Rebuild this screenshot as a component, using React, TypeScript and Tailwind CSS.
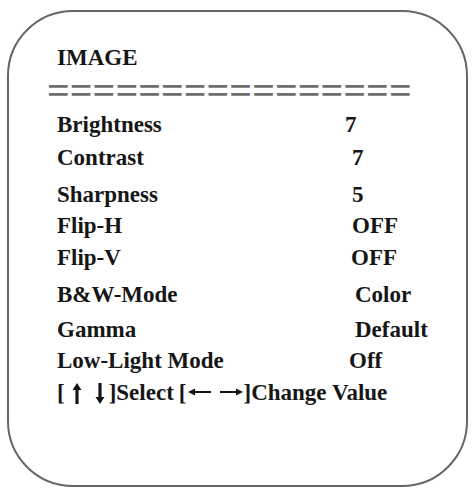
import React from "react";

const rows: { label: string; value: string; h: string; ml: string }[] = [
  { label: "Brightness", value: "7", h: "h-[33px]", ml: "ml-[0px]" },
  { label: "Contrast", value: "7", h: "h-[37px]", ml: "ml-[7px]" },
  { label: "Sharpness", value: "5", h: "h-[31px]", ml: "ml-[7px]" },
  { label: "Flip-H", value: "OFF", h: "h-[32px]", ml: "ml-[7px]" },
  { label: "Flip-V", value: "OFF", h: "h-[37px]", ml: "ml-[6px]" },
  { label: "B&W-Mode", value: "Color", h: "h-[35px]", ml: "ml-[10px]" },
  { label: "Gamma", value: "Default", h: "h-[31px]", ml: "ml-[10px]" },
  { label: "Low-Light Mode", value: "Off", h: "h-[32px]", ml: "ml-[4px]" },
];

function UpArrow() {
  return (
    <svg width="12" height="21" viewBox="0 0 12 21" className="inline-block align-[-4px]">
      <path d="M6 5 L6 21" stroke="#151515" strokeWidth="3.2" />
      <path d="M6 0 L10.5 7 L1.5 7 Z" fill="#151515" />
    </svg>
  );
}

function DownArrow() {
  return (
    <svg width="12" height="21" viewBox="0 0 12 21" className="inline-block align-[-4px]">
      <path d="M6 0 L6 16" stroke="#151515" strokeWidth="3.2" />
      <path d="M6 21 L10.5 14 L1.5 14 Z" fill="#151515" />
    </svg>
  );
}

function LeftArrow() {
  return (
    <svg width="23" height="10" viewBox="0 0 23 10" className="inline-block align-[3px]">
      <path d="M5 5 L23 5" stroke="#151515" strokeWidth="2" />
      <path d="M0 5 L7 1.5 L7 8.5 Z" fill="#151515" />
    </svg>
  );
}

function RightArrow() {
  return (
    <svg width="23" height="10" viewBox="0 0 23 10" className="inline-block align-[3px]">
      <path d="M0 5 L18 5" stroke="#151515" strokeWidth="2" />
      <path d="M23 5 L16 1.5 L16 8.5 Z" fill="#151515" />
    </svg>
  );
}

export default function App() {
  return (
    <div className="w-[473px] h-[490px] bg-white overflow-hidden">
      <div className="ml-[7px] mt-[10px] w-[461px] h-[477px] border-2 border-[#666] rounded-[66px] pt-[29px] pl-[48px] text-[#161616] [font-family:'Liberation_Serif',serif] font-bold text-[23px] leading-[33px]">
        <div className="h-[33px]">IMAGE</div>
        <div className="h-[34px] -ml-[10px] text-[40px] leading-[34px] font-bold text-[#6e6e6e] whitespace-nowrap">
          ================
        </div>
        {rows.map((r) => (
          <div key={r.label} className={`flex ${r.h} whitespace-nowrap`}>
            <div className="w-[288px] shrink-0">{r.label}</div>
            <div className={r.ml}>{r.value}</div>
          </div>
        ))}
        <div className="h-[33px] whitespace-nowrap flex items-baseline">
          <span>[</span>
          <span className="ml-[6px]"><UpArrow /></span>
          <span className="ml-[11px]"><DownArrow /></span>
          <span className="ml-[3px]">]Select</span>
          <span className="ml-[5px]">[</span>
          <span className="ml-[2px]"><LeftArrow /></span>
          <span className="ml-[9px]"><RightArrow /></span>
          <span>]Change Value</span>
        </div>
      </div>
    </div>
  );
}
